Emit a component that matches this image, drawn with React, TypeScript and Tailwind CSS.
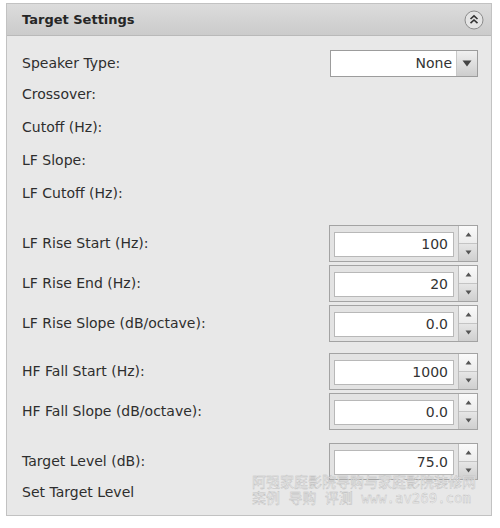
import React from "react";

const font = { fontFamily: '"DejaVu Sans", "Liberation Sans", sans-serif' };

function Spinner({ value }: { value: string }) {
  return (
    <div className="flex h-[37px] w-[149px] border border-[#a3a3a3] bg-[#e3e3e3]">
      <div className="flex flex-1 items-start pl-[4px] pr-[4px] pt-[6px]">
        <div className="flex h-[25px] w-full items-center justify-end border border-[#b8b8b8] bg-white pr-[5px] text-[14px] text-[#333]">
          {value}
        </div>
      </div>
      <div className="flex w-[19px] flex-col border-l border-[#bdbdbd]">
        <div className="flex flex-1 items-center justify-center bg-gradient-to-b from-[#fafafa] to-[#ececec]">
          <svg width="7" height="5" viewBox="0 0 7 5">
            <path d="M3.5 0.5 L6.5 4.5 L0.5 4.5 Z" fill="#555" />
          </svg>
        </div>
        <div className="flex flex-1 items-center justify-center border-t border-[#c4c4c4] bg-gradient-to-b from-[#e6e6e6] to-[#cfcfcf]">
          <svg width="7" height="5" viewBox="0 0 7 5">
            <path d="M0.5 0.5 L6.5 0.5 L3.5 4.5 Z" fill="#555" />
          </svg>
        </div>
      </div>
    </div>
  );
}

function Row({ label, h, children }: { label: string; h: string; children?: React.ReactNode }) {
  return (
    <div className={`flex items-center justify-between ${h}`}>
      <span className="text-[14px] text-[#2e2e2e]">{label}</span>
      {children}
    </div>
  );
}

export default function App() {
  return (
    <div className="relative h-[528px] w-[500px] bg-white" style={font}>
      <div className="ml-[6px] pt-[3px]">
        <div className="flex h-[513px] w-[486px] flex-col border border-[#c2c2c2] bg-[#e8e8e8]">
          <div className="flex h-[32px] shrink-0 items-center justify-between border-b border-[#b9b9b9] bg-gradient-to-b from-[#dcdcdc] to-[#cbcbcb] pl-[15px] pr-[7px]">
            <span className="text-[13px] font-bold text-[#262626]">Target Settings</span>
            <svg width="20" height="20" viewBox="0 0 20 20">
              <circle cx="10" cy="10" r="9" fill="#e4e4e4" stroke="#8c8c8c" strokeWidth="1" />
              <path d="M6.5 9 L10 5.8 L13.5 9" fill="none" stroke="#333" strokeWidth="1.6" />
              <path d="M6.5 13.2 L10 10 L13.5 13.2" fill="none" stroke="#333" strokeWidth="1.6" />
            </svg>
          </div>
          <div className="flex flex-col pl-[15px] pr-[13px] pt-[12px]">
            <Row label="Speaker Type:" h="h-[30px]">
              <div className="flex h-[27px] w-[148px] border border-[#9c9c9c] bg-white">
                <div className="flex flex-1 items-center justify-end pr-[4px] text-[14px] text-[#333]">None</div>
                <div className="flex w-[21px] items-center justify-center border-l border-[#c8c8c8] bg-gradient-to-b from-[#f0f0f0] to-[#cdcdcd]">
                  <svg width="10" height="7" viewBox="0 0 10 7">
                    <path d="M0.5 0.5 L9.5 0.5 L5 6.5 Z" fill="#444" />
                  </svg>
                </div>
              </div>
            </Row>
            <Row label="Crossover:" h="h-[33px]" />
            <Row label="Cutoff (Hz):" h="h-[33px]" />
            <Row label="LF Slope:" h="h-[33px]" />
            <Row label="LF Cutoff (Hz):" h="h-[33px]" />
            <div className="flex flex-col gap-[3px] pt-[15px]">
              <Row label="LF Rise Start (Hz):" h="h-[37px]"><Spinner value="100" /></Row>
              <Row label="LF Rise End (Hz):" h="h-[37px]"><Spinner value="20" /></Row>
              <Row label="LF Rise Slope (dB/octave):" h="h-[37px]"><Spinner value="0.0" /></Row>
            </div>
            <div className="flex flex-col gap-[3px] pt-[11px]">
              <Row label="HF Fall Start (Hz):" h="h-[37px]"><Spinner value="1000" /></Row>
              <Row label="HF Fall Slope (dB/octave):" h="h-[37px]"><Spinner value="0.0" /></Row>
            </div>
            <div className="flex flex-col pt-[13px]">
              <Row label="Target Level (dB):" h="h-[37px]"><Spinner value="75.0" /></Row>
              <Row label="Set Target Level" h="h-[24px]" />
            </div>
          </div>
        </div>
      </div>
      <div
        className="pointer-events-none absolute left-[252px] top-[474px] whitespace-pre text-[14px] leading-[16px] text-[#f0f0f0]"
        style={{ fontFamily: '"DejaVu Sans Mono", "Noto Sans CJK SC", monospace', WebkitTextStroke: "0.4px #bdbdbd" }}
      >
        {"阿强家庭影院导购与家庭影院装修网\n案例 导购 评测 www.av269.com"}
      </div>
    </div>
  );
}
